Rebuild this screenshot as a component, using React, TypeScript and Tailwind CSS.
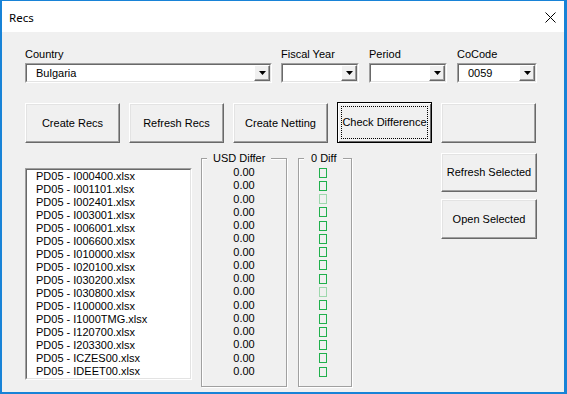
const files = [
  "I000400", "I001101", "I002401", "I003001", "I006001", "I006600", "I010000", "I020100",
  "I030200", "I030800", "I100000", "I1000TMG", "I120700", "I203300", "ICZES00", "IDEET00",
]

const raised =
  "border border-t-white border-l-white border-r-[#696969] border-b-[#696969] shadow-[inset_-1px_-1px_0_#a0a0a0,inset_1px_1px_0_#e3e3e3] bg-[#f0f0f0]"

const Arrow = () => (
  <svg width="7" height="4" viewBox="0 0 7 4">
    <path d="M0 0h7L3.5 4z" fill="#000" />
  </svg>
)

const Combo = ({ w, value }: { w: string; value?: string }) => (
  <div className={`${w} h-[20px] border border-t-[#a0a0a0] border-l-[#a0a0a0] border-r-white border-b-white`}>
    <div className="h-full flex border border-t-[#696969] border-l-[#696969] border-r-[#e3e3e3] border-b-[#e3e3e3] bg-white">
      <div className="flex-1 pl-[9px] leading-[16px]">{value}</div>
      <div className="w-[16px] h-full flex items-center justify-center border border-t-white border-l-white border-r-[#696969] border-b-[#696969] shadow-[inset_-1px_-1px_0_#a0a0a0] bg-[#f0f0f0]">
        <Arrow />
      </div>
    </div>
  </div>
)

const Field = ({ label, w, value, ml }: { label: string; w: string; value?: string; ml?: string }) => (
  <div className={ml}>
    <div className="leading-[14px] mb-[2px]">{label}</div>
    <Combo w={w} value={value} />
  </div>
)

const Btn = ({ label, w = "w-[95px]", h = "h-[40px]" }: { label?: string; w?: string; h?: string }) => (
  <div className={`${w} ${h} ${raised} flex items-center justify-center`}>{label}</div>
)

export default function App() {
  return (
    <div className="w-[567px] h-[394px] flex flex-col bg-[#f0f0f0] border-t border-l-2 border-r-[3px] border-b-2 border-[#1883d7] font-['Liberation_Sans',Arial,sans-serif] text-[11px] text-black overflow-hidden">
      <div className="h-[31px] bg-white flex items-center justify-between pl-[7px] pr-[8px] shrink-0">
        <span className="font-['Noto_Sans',sans-serif] text-[11.5px] mt-[2px]">Recs</span>
        <svg width="11" height="11" viewBox="0 0 11 11" className="mt-[1px]">
          <path d="M0.5 0.5L10.5 10.5M10.5 0.5L0.5 10.5" stroke="#000" strokeWidth="1" />
        </svg>
      </div>

      <div className="flex-1 pl-[23px] pr-[27px] pt-[15px] flex flex-col">
        <div className="flex">
          <Field label="Country" w="w-[247px]" value="Bulgaria" />
          <Field label="Fiscal Year" w="w-[78px]" ml="ml-[9px]" />
          <Field label="Period" w="w-[78px]" ml="ml-[10px]" />
          <Field label="CoCode" w="w-[80px]" ml="ml-[10px]" value="0059" />
        </div>

        <div className="flex gap-[9px] mt-[20px]">
          <Btn label="Create Recs" />
          <Btn label="Refresh Recs" />
          <Btn label="Create Netting" />
          <div className="w-[95px] h-[41px] border border-black bg-[#f0f0f0] shadow-[inset_1px_1px_0_#fff,inset_-1px_-1px_0_#696969] p-[3px] -mt-[1px]">
            <div className="h-full border border-dotted border-black flex items-center justify-center whitespace-nowrap">
              Check Difference
            </div>
          </div>
          <Btn />
        </div>

        <div className="flex items-start mt-[8px]">
          <div className="mt-[17px] w-[167px] h-[212px] border border-t-[#a0a0a0] border-l-[#a0a0a0] border-r-white border-b-white">
            <div className="h-full border border-t-[#696969] border-l-[#696969] border-r-[#e3e3e3] border-b-[#e3e3e3] bg-white pl-[9px]">
              {files.map((f) => (
                <div key={f} className="h-[13px] leading-[13px] whitespace-nowrap">
                  PD05 - {f}.xlsx
                </div>
              ))}
            </div>
          </div>

          <fieldset className="ml-[9px] w-[86px] h-[236px] border border-[#a0a0a0] shadow-[inset_1px_1px_0_#fff,1px_1px_0_#fff] pt-[1px]">
            <legend className="ml-[5px] px-[6px] leading-[14px] bg-[#f0f0f0]">USD Differ</legend>
            {files.map((f) => (
              <div key={f} className="h-[13.27px] leading-[13.27px] text-center">
                0.00
              </div>
            ))}
          </fieldset>

          <fieldset className="ml-[11px] w-[54px] h-[236px] border border-[#a0a0a0] shadow-[inset_1px_1px_0_#fff,1px_1px_0_#fff] pt-[1px]">
            <legend className="ml-[5px] px-[7px] leading-[14px] bg-[#f0f0f0]">0 Diff</legend>
            {files.map((f, i) => (
              <div key={f} className="h-[13.27px] flex items-center pl-[20px]">
                <div
                  className={
                    i === 2 || i === 9
                      ? "w-[8px] h-[10px] border border-[#9dd8ad]"
                      : "w-[8px] h-[10px] border border-[#1fb04c]"
                  }
                />
              </div>
            ))}
          </fieldset>

          <div className="ml-auto mt-[2px] flex flex-col gap-[7px]">
            <Btn label="Refresh Selected" w="w-[96px]" h="h-[39px]" />
            <Btn label="Open Selected" w="w-[96px]" h="h-[40px]" />
          </div>
        </div>
      </div>
    </div>
  )
}
